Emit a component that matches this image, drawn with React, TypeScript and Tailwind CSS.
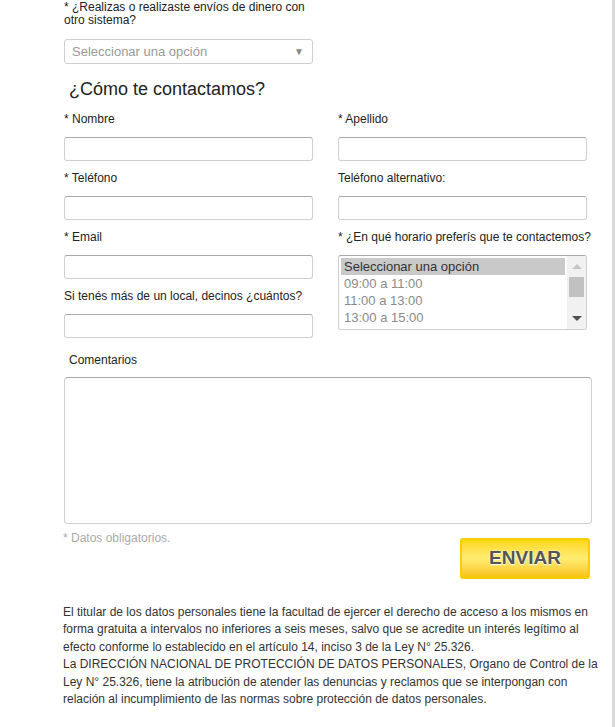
import React from "react";

const font = { fontFamily: '"Liberation Sans", Arial, sans-serif' };

const inputClass =
  "block h-[24px] w-[249px] rounded-[3px] border border-[#cfcfcf] border-t-[#a9a9a9] bg-white";

interface FieldProps {
  label: string;
}

const Field: React.FC<FieldProps> = ({ label }) => {
  return (
    <div className="flex flex-col">
      <label className="whitespace-nowrap text-[12px] leading-[15px] text-[#222]">{label}</label>
      <input type="text" className={`${inputClass} mt-[10px]`} />
    </div>
  );
};

const horarios = ["09:00 a 11:00", "11:00 a 13:00", "13:00 a 15:00", "15:00 a 17:00"];

const HorarioList = () => {
  return (
    <div className="mt-[10px] flex h-[75px] w-[249px] overflow-hidden rounded-[3px] border border-[#cfcfcf] border-t-[#a9a9a9] bg-white">
      <div className="flex-1 overflow-hidden pl-[2px] pt-[2px] pr-[2px]">
        <div className="bg-[#c9c9c9] pl-[3px] text-[13px] leading-[17px] text-[#333]">
          Seleccionar una opción
        </div>
        {horarios.map((h) => (
          <div key={h} className="pl-[3px] text-[13px] leading-[17px] text-[#8a8a8a]">
            {h}
          </div>
        ))}
      </div>
      <div className="flex w-[19px] flex-col items-center bg-[#f1f1f1]">
        <div className="mt-[8px] h-0 w-0 border-x-[5px] border-b-[5px] border-x-transparent border-b-[#c6c6c6]" />
        <div className="mt-[8px] h-[20px] w-[15px] bg-[#c1c1c1]" />
        <div className="mt-auto mb-[8px] h-0 w-0 border-x-[5px] border-t-[5px] border-x-transparent border-t-[#505050]" />
      </div>
    </div>
  );
};

const App = () => {
  return (
    <div className="flex min-h-[727px] bg-white" style={font}>
      <div className="w-[615px] border-r-[3px] border-[#dadada] bg-white pb-[10px]">
        <div className="pl-[64px] pt-[1px]">
          <div className="w-[250px] text-[12px] leading-[13px] text-[#222]">
            * ¿Realizas o realizaste envíos de dinero con otro sistema?
          </div>
          <div className="mt-[12px] flex h-[25px] w-[249px] items-center justify-between rounded-[3px] border border-[#cfcfcf] bg-white pl-[7px] pr-[8px]">
            <span className="text-[13px] text-[#999]">Seleccionar una opción</span>
            <span className="text-[10px] text-[#888]">▼</span>
          </div>
        </div>

        <h2 className="mt-[13px] pl-[69px] text-[18px] leading-[24px] text-[#222]">
          ¿Cómo te contactamos?
        </h2>

        <div className="mt-[11px] flex gap-[25px] pl-[64px]">
          <div className="flex w-[249px] flex-col gap-[10px]">
            <Field label="* Nombre" />
            <Field label="* Teléfono" />
            <Field label="* Email" />
            <Field label="Si tenés más de un local, decinos ¿cuántos?" />
          </div>
          <div className="flex w-[249px] flex-col gap-[10px]">
            <Field label="* Apellido" />
            <Field label="Teléfono alternativo:" />
            <div className="flex flex-col">
              <label className="whitespace-nowrap text-[12px] leading-[15px] text-[#222]">
                * ¿En qué horario preferís que te contactemos?
              </label>
              <HorarioList />
            </div>
          </div>
        </div>

        <div className="mt-[15px] pl-[69px] text-[12px] leading-[15px] text-[#222]">Comentarios</div>
        <div className="pl-[64px]">
          <textarea className="mt-[9px] block h-[147px] w-[528px] resize-none rounded-[4px] border border-[#cfcfcf] border-t-[#a9a9a9] bg-white" />
          <div className="flex w-[526px] justify-between">
            <span className="mt-[7px] -ml-px text-[12px] leading-[14px] text-[#aaa]">* Datos obligatorios.</span>
            <button className="mt-[14px] flex h-[41px] w-[130px] items-center justify-center rounded-[3px] border-2 border-[#f7cf00] bg-gradient-to-b from-[#ffd800] via-[#ffec70] to-[#f8c300] text-[19px] font-bold text-[#555] [text-shadow:0_0_2px_#fff,0_1px_1px_#fff]">
              ENVIAR
            </button>
          </div>
          <p className="mt-[25px] w-[540px] -ml-px text-[12px] leading-[17.4px] text-[#333]">
            El titular de los datos personales tiene la facultad de ejercer el derecho de acceso a los mismos en forma gratuita a intervalos no inferiores a seis meses, salvo que se acredite un interés legítimo al efecto conforme lo establecido en el artículo 14, inciso 3 de la Ley N° 25.326.
            <br />
            La DIRECCIÓN NACIONAL DE PROTECCIÓN DE DATOS PERSONALES, Organo de Control de la Ley N° 25.326, tiene la atribución de atender las denuncias y reclamos que se interpongan con relación al incumplimiento de las normas sobre protección de datos personales.
          </p>
        </div>
      </div>
    </div>
  );
};

export default App;
